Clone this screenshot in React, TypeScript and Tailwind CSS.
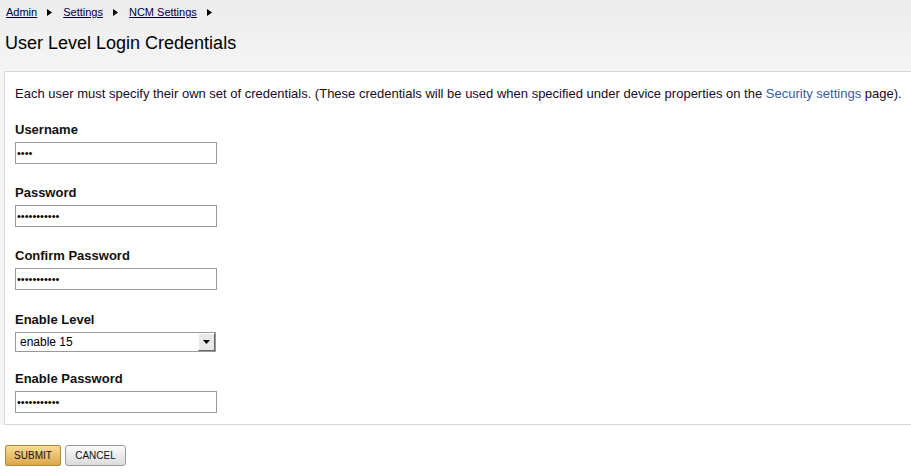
import React from "react";

const font = { fontFamily: '"Liberation Sans", Arial, sans-serif' };

function Arrow() {
  return (
    <svg width="5" height="7" viewBox="0 0 5 7" className="ml-[10px] mr-[11px]">
      <path d="M0 0 L5 3.5 L0 7 Z" fill="#000" />
    </svg>
  );
}

function Dots({ n }: { n: number }) {
  return (
    <div className="h-[22px] w-[202px] border border-[#999] bg-white flex items-center pl-[1px] text-[11px] leading-none text-black">
      {"\u2022".repeat(n)}
    </div>
  );
}

function Field({ label, children }: { label: string; children: React.ReactNode }) {
  return (
    <div className="flex flex-col">
      <div className="text-[13px] font-bold text-[#111] leading-[16px] mb-[4px]">{label}</div>
      {children}
    </div>
  );
}

export default function App() {
  return (
    <div style={font} className="w-[911px] h-[472px] bg-white overflow-hidden relative">
      <div className="bg-gradient-to-b from-[#ececec] to-[#f5f5f5] pt-[5px] pb-0 h-[71px]">
        <div className="flex items-center pl-[6px] text-[11px] leading-[14px] text-[#000044]">
          <span className="underline">Admin</span>
          <Arrow />
          <span className="underline">Settings</span>
          <Arrow />
          <span className="underline">NCM Settings</span>
          <Arrow />
        </div>
        <div className="pl-[5px] mt-[13px] text-[18px] leading-[22px] text-black">
          User Level Login Credentials
        </div>
      </div>
      <div className="bg-[#f5f5f5] pl-[4px]">
        <div className="bg-white border-t border-l border-b border-[#d8d8d8] h-[354px] pl-[10px] pt-[14px]">
          <div className="text-[13px] leading-[16px] text-[#1a0a2a]">
            Each user must specify their own set of credentials. (These credentials will be used when specified under device properties on the{" "}
            <span className="text-[#3a5d9c]">Security settings</span> page).
          </div>
          <div className="flex flex-col gap-[21px] mt-[20px]">
            <Field label="Username">
              <Dots n={4} />
            </Field>
            <Field label="Password">
              <Dots n={11} />
            </Field>
            <Field label="Confirm Password">
              <Dots n={11} />
            </Field>
            <div className="mt-[1px]">
              <Field label="Enable Level">
                <div className="h-[20px] w-[201px] border border-[#999] bg-white flex items-center justify-between text-[12px] text-black">
                  <span className="pl-[4px]">enable 15</span>
                  <div className="h-[18px] w-[17px] bg-[#e8e8e8] border border-t-white border-l-white border-r-[#666] border-b-[#666] flex items-center justify-center">
                    <svg width="7" height="4" viewBox="0 0 7 4">
                      <path d="M0 0 H7 L3.5 4 Z" fill="#000" />
                    </svg>
                  </div>
                </div>
              </Field>
            </div>
            <div className="-mt-[2px]">
              <Field label="Enable Password">
                <Dots n={11} />
              </Field>
            </div>
          </div>
        </div>
      </div>
      <div className="flex gap-[4px] pl-[5px] mt-[20px] bg-white">
        <button className="h-[21px] w-[56px] rounded-[2px] border border-[#b08a3a] bg-gradient-to-b from-[#f9dc94] to-[#dba74a] text-[10px] text-[#111] leading-none">
          SUBMIT
        </button>
        <button className="h-[21px] w-[61px] rounded-[3px] border border-[#9a9a9a] bg-gradient-to-b from-[#fbfbfb] to-[#dcdcdc] text-[10px] text-[#111] leading-none">
          CANCEL
        </button>
      </div>
    </div>
  );
}
